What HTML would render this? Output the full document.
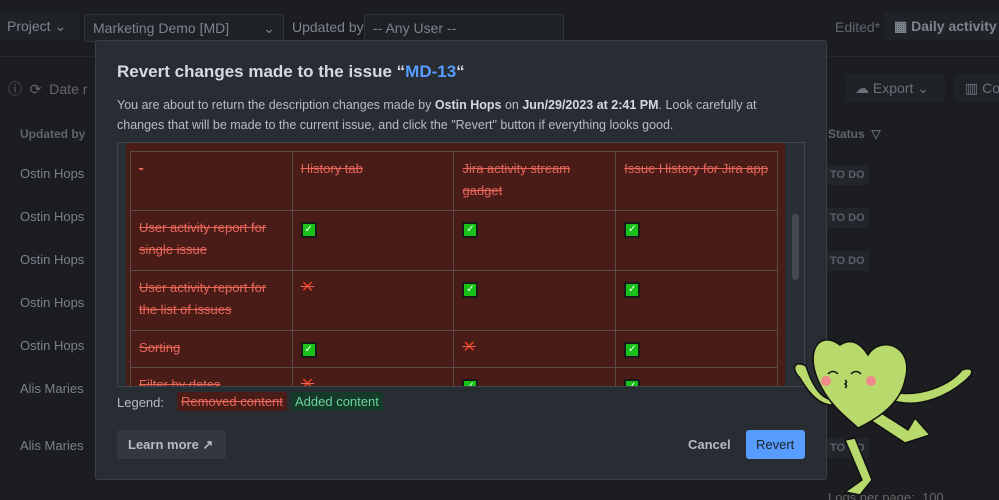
<!DOCTYPE html>
<html><head><meta charset="utf-8"><style>
*{box-sizing:border-box;margin:0;padding:0}
html,body{width:999px;height:500px;overflow:hidden}
body{background:#1b1d21;font-family:"Liberation Sans",sans-serif;position:relative;color:#9aa1ab}
.a{position:absolute;white-space:nowrap}
.sel{position:absolute;border:1px solid #30343a;border-radius:3px;background:#1e2126;height:28px;font-size:14px;color:#7d848e;padding:5px 8px}
.modal{position:absolute;left:95px;top:40px;width:732px;height:440px;background:#282c33;border:1px solid #3a3f47;border-radius:3px}
.tbl{position:absolute;left:21px;top:101px;width:688px;height:245px;border:1px solid #40454d;overflow:hidden;background:#2a2e35}
.red{position:absolute;left:8px;top:0;width:659px;height:245px;background:#4a1c18}
table{position:absolute;left:4px;top:8px;border-collapse:collapse;width:648px}
td{border:1px solid #5b4a4a;vertical-align:top;padding:6px 8px;width:162px;font-size:13px;line-height:22px;color:#e8665a;text-decoration:line-through}
.ck{display:inline-block;width:16px;height:16px;background:#19c219;border:2px solid #1a1a1a;margin-top:3px;color:#fff;font-size:10px;line-height:12px;text-align:center}
.x{color:#e8401e;font-size:16px}
.todo{position:absolute;left:826px;font-size:11px;font-weight:bold;color:#5a616b;background:#22252a;padding:4px 4px}
.nm{position:absolute;left:20px;font-size:13px;color:#7b828c}
</style></head><body>
<div class="a" style="left:0;top:0;width:999px;height:57px;background:#1b1d21;border-bottom:1px solid #25282d"></div>
<div class="a" style="left:0;top:13px;width:80px;height:28px;background:#1f2227;font-size:14px;color:#7d848e;padding:5px 7px">Project ⌄</div>
<div class="sel" style="left:84px;top:14px;width:200px">Marketing Demo [MD]<span style="float:right">⌄</span></div>
<div class="a" style="left:292px;top:19px;font-size:14px;color:#7d848e">Updated by:</div>
<div class="sel" style="left:364px;top:14px;width:200px">-- Any User --</div>
<div class="a" style="left:835px;top:19px;font-size:14px;color:#5f666f">Edited*</div>
<div class="a" style="left:884px;top:13px;width:120px;height:28px;background:#1f2227;font-size:14px;font-weight:bold;color:#7d848e;padding:5px 10px">▦ Daily activity re</div>
<div class="a" style="left:8px;top:79px;font-size:14px;color:#666">ⓘ&nbsp; ⟳&nbsp; Date r</div>
<div class="a" style="left:845px;top:74px;width:100px;height:28px;background:#1f2227;font-size:14px;color:#6a717b;padding:6px 10px">☁ Export ⌄</div>
<div class="a" style="left:955px;top:74px;width:50px;height:28px;background:#1f2227;font-size:14px;color:#6a717b;padding:6px 10px">▥ Co</div>
<div class="a" style="left:20px;top:127px;font-size:12px;font-weight:bold;color:#5f666f">Updated by</div>
<div class="a" style="left:828px;top:127px;font-size:12px;font-weight:bold;color:#5f666f">Status &nbsp;▽</div>
<div class="nm" style="top:166px">Ostin Hops</div><div class="nm" style="top:209px">Ostin Hops</div><div class="nm" style="top:252px">Ostin Hops</div><div class="nm" style="top:295px">Ostin Hops</div><div class="nm" style="top:338px">Ostin Hops</div><div class="nm" style="top:381px">Alis Maries</div><div class="nm" style="top:438px">Alis Maries</div>
<div class="todo" style="top:165px">TO DO</div><div class="todo" style="top:208px">TO DO</div><div class="todo" style="top:251px">TO DO</div><div class="todo" style="top:438px">TO DO</div>
<div class="a" style="left:828px;top:490px;font-size:13px;color:#666">Logs per page: &nbsp;100</div>
<div class="modal">
<div class="a" style="left:21px;top:21px;font-size:17px;font-weight:bold;color:#d6dae0">Revert changes made to the issue “<span style="color:#579dff">MD-13</span>“</div>
<div class="a" style="left:21px;top:54px;font-size:12.5px;line-height:20px;color:#b6bcc5;white-space:normal;width:680px">You are about to return the description changes made by <b style="color:#d6dae0">Ostin Hops</b> on <b style="color:#d6dae0">Jun/29/2023 at 2:41 PM</b>. Look carefully at changes that will be made to the current issue, and click the "Revert" button if everything looks good.</div>
<div class="tbl"><div class="red"><table>
<tr style="height:59px"><td>-</td><td>History tab</td><td>Jira activity stream gadget</td><td>Issue History for Jira app</td></tr>
<tr style="height:60px"><td>User activity report for single issue</td><td><span class="ck">✓</span></td><td><span class="ck">✓</span></td><td><span class="ck">✓</span></td></tr>
<tr style="height:60px"><td>User activity report for the list of issues</td><td><span class="x">✕</span></td><td><span class="ck">✓</span></td><td><span class="ck">✓</span></td></tr>
<tr style="height:37px"><td>Sorting</td><td><span class="ck">✓</span></td><td><span class="x">✕</span></td><td><span class="ck">✓</span></td></tr>
<tr style="height:37px"><td>Filter by dates</td><td><span class="x">✕</span></td><td><span class="ck">✓</span></td><td><span class="ck">✓</span></td></tr>
</table></div>
<div class="a" style="left:674px;top:71px;width:7px;height:66px;background:#454a52;border-radius:4px"></div></div>
<div class="a" style="left:21px;top:354px;font-size:13px;color:#b6bcc5">Legend:</div>
<div class="a" style="left:81px;top:351px;font-size:13px;color:#e8665a;background:#4a1c18;padding:2px 4px;text-decoration:line-through;border-radius:2px">Removed content</div>
<div class="a" style="left:195px;top:351px;font-size:13px;color:#6ad29a;background:#163a2a;padding:2px 4px;border-radius:2px">Added content</div>
<div class="a" style="left:21px;top:389px;width:109px;height:29px;background:#323740;border-radius:3px;font-size:13px;font-weight:bold;color:#b6bcc5;padding:7px 11px">Learn more ↗</div>
<div class="a" style="left:592px;top:396px;font-size:13px;font-weight:bold;color:#b6bcc5">Cancel</div>
<div class="a" style="left:650px;top:389px;width:59px;height:29px;background:#579dff;border-radius:3px;font-size:13px;color:#1d2125;padding:7px 10px">Revert</div>
</div>
<svg class="a" style="left:780px;top:330px" width="200" height="170" viewBox="780 330 200 170">
<g fill="#b8d96c" stroke="#111" stroke-width="1.5">
<path d="M806 366 C795 360 790 368 800 378 C810 395 820 405 832 405 L832 400 C820 398 812 385 806 366Z"/>
<path d="M890 400 C920 410 950 395 968 378 C975 372 972 366 962 370 C950 385 920 398 892 392Z"/>
<path d="M870 420 L905 443 L930 435 L915 418 L908 430 L880 412Z"/>
<path d="M845 440 L862 480 L845 492 L860 495 L872 480 L855 438Z"/>
<path d="M840 345 C820 330 805 350 818 380 C828 405 850 420 858 428 C875 420 900 405 905 380 C915 345 880 335 868 355 C860 342 850 338 840 345Z"/>
</g>
<circle cx="826" cy="381" r="5" fill="#f08a8a"/><circle cx="871" cy="381" r="5" fill="#f08a8a"/>
<path d="M828 374 q5 -5 10 0 M851 374 q5 -5 10 0" stroke="#111" fill="none" stroke-width="1.5"/>
<path d="M845 380 q3 2 0 4 q3 2 0 4" stroke="#111" fill="none" stroke-width="1.5"/>
</svg>
</body></html>
